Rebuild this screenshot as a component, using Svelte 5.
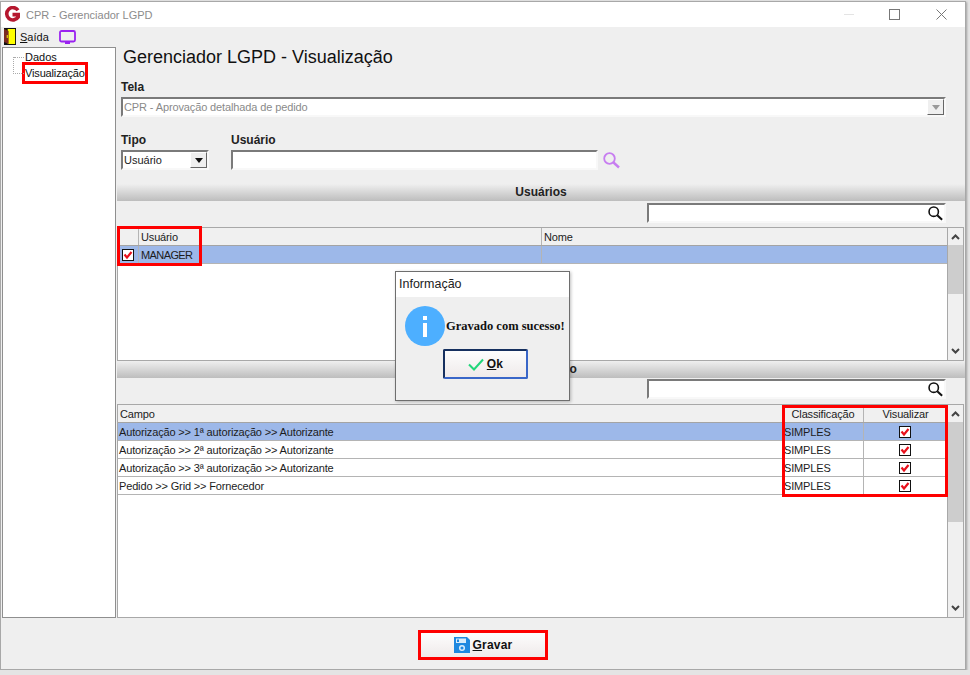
<script lang="ts">
  const campos = [
    "Autorização >> 1ª autorização >> Autorizante",
    "Autorização >> 2ª autorização >> Autorizante",
    "Autorização >> 3ª autorização >> Autorizante",
    "Pedido >> Grid >> Fornecedor",
  ];
</script>

{#snippet check()}
  <svg class="check" width="12" height="12" viewBox="0 0 12 12">
    <rect x="0.5" y="0.5" width="11" height="11" fill="#fff" stroke="#111" />
    <path d="M2.5 5.5 L5 8.5 L9.5 3" fill="none" stroke="#e8101c" stroke-width="2.2" />
  </svg>
{/snippet}

{#snippet lens(color: string)}
  <svg width="17" height="17" viewBox="0 0 17 17">
    <circle cx="6.5" cy="6.5" r="5.3" fill="none" stroke={color} stroke-width="1.8" />
    <path d="M10.5 10.5 L16 15.5" stroke={color} stroke-width="2.4" />
  </svg>
{/snippet}

{#snippet scrollbar(thumb: number)}
  <div class="scroll">
    <svg class="arrow" width="15" height="17" viewBox="0 0 15 17"><path d="M4 11 L7.5 7.5 L11 11" fill="none" stroke="#444" stroke-width="2" /></svg>
    <div class="track"><div class="thumb" style="height: {thumb}px"></div></div>
    <svg class="arrow" width="15" height="17" viewBox="0 0 15 17"><path d="M4 6 L7.5 9.5 L11 6" fill="none" stroke="#444" stroke-width="2" /></svg>
  </div>
{/snippet}

<div class="window">
  <header class="titlebar">
    <svg class="logo" width="17" height="17" viewBox="0 0 17 17">
      <path d="M14 4.2 A6.2 6.2 0 1 0 14.2 11 L14.2 8.6 L8.5 8.6" fill="none" stroke="#b5172e" stroke-width="3.6" />
    </svg>
    <span class="title">CPR - Gerenciador LGPD</span>
    <div class="caption">
      <span class="min"></span>
      <span class="max"></span>
      <svg width="11" height="11" viewBox="0 0 11 11"><path d="M0.5 0.5 L10.5 10.5 M10.5 0.5 L0.5 10.5" stroke="#777" /></svg>
    </div>
  </header>

  <div class="menubar">
    <svg width="12" height="17" viewBox="0 0 13 17" preserveAspectRatio="none">
      <rect width="13" height="17" fill="#111" />
      <rect x="4" y="1" width="8" height="15" fill="#ffff00" />
      <path d="M0 1 L5 3 L5 16 L0 14 Z" fill="#7a2a20" />
      <rect x="3" y="7" width="1" height="3" fill="#ffff00" />
    </svg>
    <span class="menu-text"><u>S</u>aída</span>
    <svg class="tv" width="17" height="15" viewBox="0 0 17 15">
      <rect x="1" y="1" width="15" height="10.5" rx="1.5" fill="none" stroke="#9a22f0" stroke-width="1.8" />
      <rect x="6" y="12" width="5" height="2" fill="#9a22f0" />
    </svg>
  </div>

  <div class="body">
    <aside class="tree">
      <div class="tree-lines"></div>
      <div class="node">Dados</div>
      <div class="node marked">Visualização</div>
    </aside>

    <main class="content">
      <h1>Gerenciador LGPD - Visualização</h1>

      <div class="form">
        <label class="bold" for="tela">Tela</label>
        <div class="field combo disabled" id="tela">
          <span>CPR - Aprovação detalhada de pedido</span>
          <div class="combo-btn"><i class="tri grey"></i></div>
        </div>

        <div class="filters">
          <div>
            <div class="bold">Tipo</div>
            <div class="field combo tipo">
              <span>Usuário</span>
              <div class="combo-btn"><i class="tri"></i></div>
            </div>
          </div>
          <div class="user-col">
            <div class="bold">Usuário</div>
            <div class="user-row">
              <div class="field user-input"></div>
              {@render lens("#c77df0")}
            </div>
          </div>
        </div>
      </div>

      <div class="band usuarios-band">Usuários</div>
      <div class="search-row">
        <div class="field search">{@render lens("#111")}</div>
      </div>

      <div class="grid users">
        <div class="grid-main">
          <div class="row head">
            <div class="cell c-check"></div>
            <div class="cell c-user">Usuário</div>
            <div class="cell c-fill">Nome</div>
          </div>
          <div class="row selected">
            <div class="cell c-check center">{@render check()}</div>
            <div class="cell c-user manager">MANAGER</div>
            <div class="cell c-fill"></div>
          </div>
          <div class="mark mark-users"></div>
        </div>
        {@render scrollbar(49)}
      </div>

      <div class="band second">Visualização</div>
      <div class="search-row low">
        <div class="field search">{@render lens("#111")}</div>
      </div>

      <div class="grid campos">
        <div class="grid-main">
          <div class="row head">
            <div class="cell c-campo">Campo</div>
            <div class="cell c-class center">Classificação</div>
            <div class="cell c-vis center">Visualizar</div>
          </div>
          {#each campos as campo, i}
            <div class="row" class:selected={i === 0}>
              <div class="cell c-campo">{campo}</div>
              <div class="cell c-class">SIMPLES</div>
              <div class="cell c-vis center">{@render check()}</div>
            </div>
          {/each}
          <div class="mark mark-campos"></div>
        </div>
        {@render scrollbar(100)}
      </div>
    </main>
  </div>

  <footer class="bottom">
    <button class="save">
      <svg width="16" height="16" viewBox="0 0 16 16">
        <path d="M0 0 H13 L16 3 V16 H0 Z" fill="#1e88e0" />
        <rect x="2" y="1.5" width="10" height="4.5" fill="#d8ecfb" />
        <rect x="3" y="2.5" width="2" height="2.5" fill="#1e88e0" />
        <circle cx="8" cy="11" r="2.3" fill="none" stroke="#d8ecfb" stroke-width="1.5" />
      </svg>
      <span><u>G</u>ravar</span>
    </button>
  </footer>

  <div class="dialog">
    <div class="dialog-title">Informação</div>
    <div class="dialog-body">
      <div class="message">
        <svg width="40" height="40" viewBox="0 0 40 40">
          <circle cx="20" cy="20" r="20" fill="#4dafff" />
          <rect x="18" y="10" width="4" height="4" fill="#fff" />
          <rect x="18" y="17" width="4" height="14" fill="#fff" />
        </svg>
        <span>Gravado com sucesso!</span>
      </div>
      <button class="ok">
        <svg width="16" height="13" viewBox="0 0 16 13"><path d="M1 6.5 L6 11.5 L15 1.5" fill="none" stroke="#22d67a" stroke-width="2" /></svg>
        <span><u>O</u>k</span>
      </button>
    </div>
  </div>
</div>

<style>
  :global(body) {
    margin: 0;
    background: #e4e4e4;
  }

  .window {
    position: relative;
    box-sizing: border-box;
    width: 966px;
    height: 669px;
    margin-top: 1px;
    border: 1px solid #a8a8a8;
    background: #efefef;
    display: flex;
    flex-direction: column;
    font-family: "Liberation Sans", Arial, sans-serif;
    font-size: 11px;
    color: #222;
    box-shadow: 1px 1px 2px rgba(0, 0, 0, 0.3);
  }

  .titlebar {
    height: 25px;
    background: #fff;
    display: flex;
    align-items: center;
    padding-left: 3px;
    flex-shrink: 0;
  }

  .title {
    margin-left: 5px;
    color: #8c8c8c;
    font-size: 11px;
  }

  .caption {
    margin-left: auto;
    display: flex;
    align-items: center;
    padding-right: 18px;
  }

  .min {
    width: 10px;
    height: 1px;
    background: #e4e4e4;
    margin-right: 35px;
  }

  .max {
    width: 9px;
    height: 9px;
    border: 1px solid #777;
    margin-right: 36px;
  }

  .menubar {
    box-sizing: border-box;
    height: 20px;
    padding: 0 0 1px 3px;
    display: flex;
    align-items: center;
    flex-shrink: 0;
  }

  .menu-text {
    margin-left: 4px;
    color: #111;
  }

  .tv {
    margin: 2px 0 0 10px;
  }

  .body {
    flex: 1;
    display: flex;
    min-height: 0;
    padding-left: 1px;
  }

  .tree {
    position: relative;
    box-sizing: border-box;
    width: 114px;
    background: #fff;
    border: 1px solid #8f8f8f;
    padding: 1px 0 0 22px;
    color: #111;
    flex-shrink: 0;
  }

  .tree-lines {
    position: absolute;
    left: 10px;
    top: 9px;
    width: 10px;
    height: 16px;
    border-left: 1px dotted #aaa;
    border-bottom: 1px dotted #aaa;
  }

  .tree-lines::before {
    content: "";
    position: absolute;
    left: 0;
    top: 0;
    width: 10px;
    border-top: 1px dotted #aaa;
  }

  .node {
    height: 16px;
    line-height: 16px;
  }

  .marked {
    box-sizing: border-box;
    width: 66px;
    height: 22px;
    border: 3px solid #fe0000;
    margin: -3px 0 0 -3px;
    letter-spacing: -0.15px;
    white-space: nowrap;
  }

  .content {
    flex: 1;
    min-width: 0;
    display: flex;
    flex-direction: column;
  }

  h1 {
    margin: 0;
    height: 33px;
    line-height: 21px;
    padding: 0 0 0 7px;
    font-size: 18px;
    font-weight: 400;
    color: #111;
  }

  .form {
    padding: 0 19px 0 5px;
    height: 104px;
    flex-shrink: 0;
  }

  .bold {
    display: block;
    font-size: 12px;
    font-weight: 700;
    height: 14px;
    line-height: 14px;
    color: #222;
  }

  .field {
    box-sizing: border-box;
    height: 20px;
    background: #fff;
    border: 2px solid;
    border-color: #7a7a7a #f8f8f8 #f8f8f8 #7a7a7a;
  }

  .combo {
    display: flex;
    align-items: center;
    justify-content: space-between;
    padding-left: 1px;
    margin-top: 3px;
    line-height: 16px;
  }

  .disabled span {
    color: #8a8a8a;
    letter-spacing: -0.12px;
  }

  .combo-btn {
    box-sizing: border-box;
    width: 17px;
    height: 16px;
    background: #efefef;
    border: 1px solid;
    border-color: #fff #666 #666 #fff;
    display: flex;
    align-items: center;
    justify-content: center;
  }

  .tri {
    width: 0;
    height: 0;
    border: 4px solid transparent;
    border-top: 5px solid #111;
    border-bottom: 0;
  }

  .tri.grey {
    border-top-color: #999;
  }

  .filters {
    display: flex;
    margin-top: 16px;
  }

  .tipo {
    width: 88px;
  }

  .user-col {
    margin-left: 22px;
    flex: 1;
  }

  .user-row {
    display: flex;
    align-items: center;
    gap: 5px;
    margin-top: 3px;
  }

  .user-input {
    width: 367px;
  }

  .band {
    height: 17px;
    line-height: 17px;
    text-align: center;
    font-size: 12px;
    font-weight: 700;
    background: linear-gradient(#efefef, #bdbdbd);
    flex-shrink: 0;
    margin-left: 1px;
    color: #222;
  }

  .search-row {
    display: flex;
    justify-content: flex-end;
    padding: 2px 19px 4px 0;
    flex-shrink: 0;
  }

  .search-row.low {
    padding-top: 1px;
    padding-bottom: 5px;
  }

  .search {
    width: 299px;
    display: flex;
    justify-content: flex-end;
    align-items: center;
    padding-right: 1px;
  }

  .search :global(svg) {
    width: 15px;
    height: 15px;
  }

  .grid {
    display: flex;
    box-sizing: border-box;
    background: #fff;
    border: 1px solid #a8a8a8;
    flex-shrink: 0;
    margin-left: 1px;
    margin-right: 1px;
  }

  .users {
    height: 134px;
  }

  .campos {
    flex: 1;
    min-height: 0;
  }

  .grid-main {
    position: relative;
    flex: 1;
    min-width: 0;
  }

  .row {
    display: flex;
    box-sizing: border-box;
    height: 18px;
    line-height: 18px;
    border-bottom: 1px solid #b4b4b4;
    background: #fff;
    color: #1c1c1c;
  }

  .row.head {
    background: #f0f0f0;
    border-bottom-color: #a4a4a4;
  }

  .row.selected {
    background: #9db8e9;
  }

  .cell {
    box-sizing: border-box;
    border-right: 1px solid #b4b4b4;
    white-space: nowrap;
    overflow: hidden;
    padding-left: 1px;
    letter-spacing: -0.15px;
  }

  .center {
    display: flex;
    align-items: center;
    justify-content: center;
    padding-left: 0;
  }

  .c-check {
    width: 21px;
  }

  .c-user {
    width: 403px;
    padding-left: 2px;
  }

  .manager {
    letter-spacing: -0.6px;
  }

  .c-fill {
    flex: 1;
    padding-left: 2px;
    border-right: 0;
  }

  .c-campo {
    width: 665px;
  }

  .head .c-campo {
    padding-left: 2px;
  }

  .c-class {
    width: 81px;
  }

  .c-vis {
    flex: 1;
    border-right: 0;
  }

  .c-vis .check {
    margin-right: 2px;
  }

  .mark {
    position: absolute;
    box-sizing: border-box;
    border: 3px solid #fe0000;
    pointer-events: none;
  }

  .mark-users {
    left: -1px;
    top: -2px;
    width: 85px;
    height: 40px;
  }

  .mark-campos {
    left: 664px;
    top: 0;
    width: 166px;
    height: 92px;
  }

  .scroll {
    width: 16px;
    box-sizing: border-box;
    display: flex;
    flex-direction: column;
    background: #f0f0f0;
    border-left: 1px solid #a8a8a8;
    flex-shrink: 0;
  }

  .arrow {
    flex-shrink: 0;
  }

  .track {
    flex: 1;
  }

  .thumb {
    background: #cdcdcd;
  }

  .bottom {
    box-sizing: border-box;
    height: 51px;
    flex-shrink: 0;
    display: flex;
    justify-content: center;
    align-items: center;
    padding-top: 3px;
  }

  button {
    font-family: "Liberation Sans", Arial, sans-serif;
    font-weight: 700;
    font-size: 12px;
    letter-spacing: 0.2px;
    color: #111;
    display: flex;
    align-items: center;
    justify-content: center;
    box-sizing: border-box;
    background: linear-gradient(#fdfdfd, #efeaea);
    padding: 0;
  }

  .save {
    width: 130px;
    height: 30px;
    gap: 3px;
    border: 3px solid #fe0000;
  }

  .dialog {
    position: absolute;
    left: 394px;
    top: 269px;
    box-sizing: border-box;
    width: 175px;
    height: 130px;
    border: 1px solid #6e6e6e;
    background: #efefef;
    box-shadow: 1px 1px 3px rgba(0, 0, 0, 0.25);
  }

  .dialog-title {
    height: 25px;
    line-height: 25px;
    background: #fff;
    padding-left: 3px;
    font-size: 12.5px;
    color: #222;
  }

  .dialog-body {
    display: flex;
    flex-direction: column;
    align-items: center;
  }

  .message {
    display: flex;
    align-items: center;
    align-self: flex-start;
    margin: 9px 0 0 9px;
    gap: 1px;
    font-family: "Liberation Serif", "Times New Roman", serif;
    font-weight: 700;
    font-size: 12.5px;
    color: #111;
    white-space: nowrap;
  }

  .ok {
    width: 85px;
    height: 30px;
    margin: 3px 0 0 6px;
    gap: 3px;
    border: 2px solid #3a66c8;
    border-top-color: #16305f;
    border-left-color: #16305f;
    border-radius: 2px;
  }
</style>
